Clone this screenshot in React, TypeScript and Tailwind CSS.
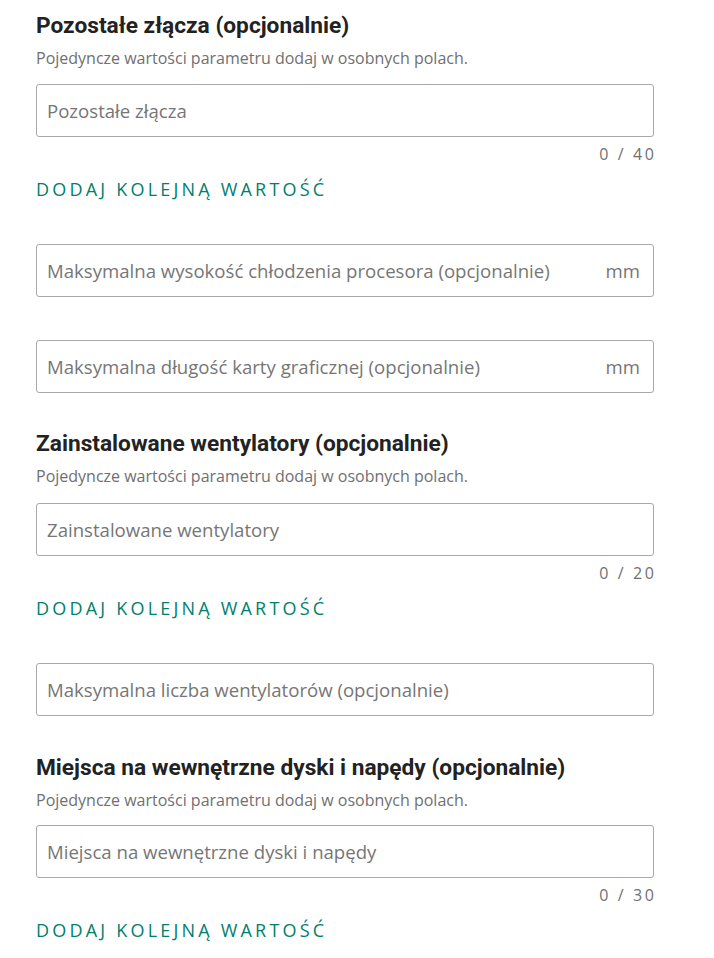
import React from "react";

const sans = "font-['Open_Sans',sans-serif]";

function Heading({ title }: { title: string }) {
  return (
    <div>
      <h2 className="font-['Roboto',sans-serif] text-[22.7px] font-bold leading-[28px] text-[#222]">{title}</h2>
      <p className={`${sans} mt-[7px] text-[16px] leading-[22px] text-[#707070]`}>
        Pojedyncze wartości parametru dodaj w osobnych polach.
      </p>
    </div>
  );
}

function Field({ placeholder, unit }: { placeholder: string; unit?: string }) {
  return (
    <div className="flex h-[53px] items-center rounded-[3px] border border-[#a8a8a8] bg-white pl-[10px] pr-[13px]">
      <input
        placeholder={placeholder}
        className={`${sans} min-w-0 flex-1 bg-transparent text-[18.6px] text-[#333] outline-none placeholder:text-[#767676]`}
      />
      {unit && <span className={`${sans} ml-2 text-[18.6px] text-[#767676]`}>{unit}</span>}
    </div>
  );
}

function Counter({ max }: { max: number }) {
  return (
    <div className={`${sans} mt-[7px] -mr-[2.6px] text-right text-[16px] leading-[20px] tracking-[2.6px] text-[#707070]`}>
      0 / {max}
    </div>
  );
}

function AddButton() {
  return (
    <button className={`${sans} mt-[13px] block text-[18px] font-medium leading-[24px] tracking-[3.2px] text-[#00806b]`}>
      DODAJ KOLEJNĄ WARTOŚĆ
    </button>
  );
}

export default function App() {
  return (
    <div className="min-h-[958px] w-[690px] bg-white px-[36px] pt-[12px]">
      <Heading title="Pozostałe złącza (opcjonalnie)" />
      <div className="mt-[15px]">
        <Field placeholder="Pozostałe złącza" />
      </div>
      <Counter max={40} />
      <AddButton />

      <div className="mt-[43px]">
        <Field placeholder="Maksymalna wysokość chłodzenia procesora (opcjonalnie)" unit="mm" />
      </div>
      <div className="mt-[43px]">
        <Field placeholder="Maksymalna długość karty graficznej (opcjonalnie)" unit="mm" />
      </div>

      <div className="mt-[37px]">
        <Heading title="Zainstalowane wentylatory (opcjonalnie)" />
      </div>
      <div className="mt-[16px]">
        <Field placeholder="Zainstalowane wentylatory" />
      </div>
      <Counter max={20} />
      <AddButton />

      <div className="mt-[43px]">
        <Field placeholder="Maksymalna liczba wentylatorów (opcjonalnie)" />
      </div>

      <div className="mt-[38px]">
        <Heading title="Miejsca na wewnętrzne dyski i napędy (opcjonalnie)" />
      </div>
      <div className="mt-[14px]">
        <Field placeholder="Miejsca na wewnętrzne dyski i napędy" />
      </div>
      <Counter max={30} />
      <AddButton />
    </div>
  );
}
